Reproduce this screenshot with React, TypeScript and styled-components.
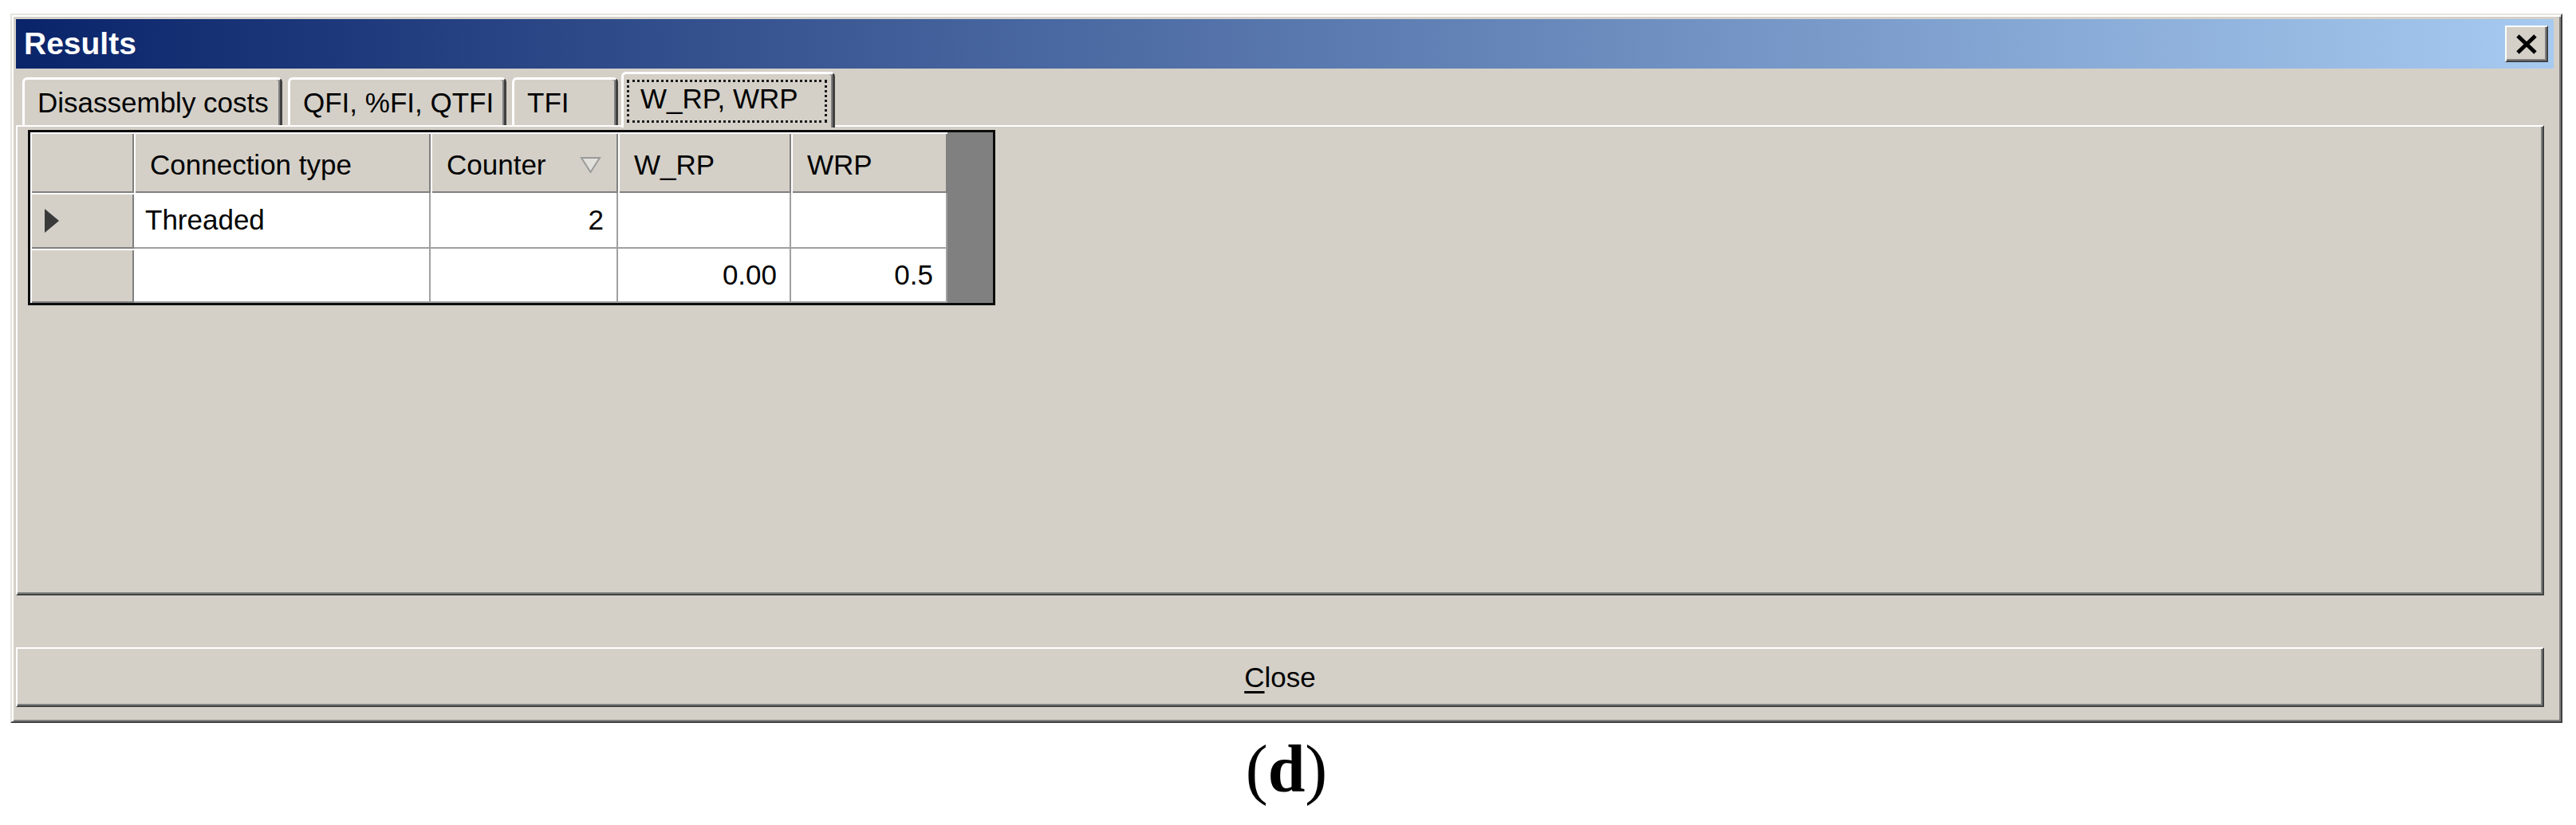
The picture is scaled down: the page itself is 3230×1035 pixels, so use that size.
import React from "react";
import styled, { createGlobalStyle } from "styled-components";

const GlobalStyle = createGlobalStyle`
  html, body {
    margin: 0;
    padding: 0;
    background: #ffffff;
  }
  body {
    font-family: "Liberation Sans", Arial, sans-serif;
  }
`;

const face = `"Liberation Sans", Arial, sans-serif`;

const Page = styled.div`
  width: 3230px;
  height: 1035px;
  box-sizing: border-box;
  padding: 17px 0 0 13px;
  background: #ffffff;
  display: flex;
  flex-direction: column;
`;

const Window = styled.div`
  width: 3200px;
  height: 890px;
  box-sizing: border-box;
  flex-shrink: 0;
  display: flex;
  flex-direction: column;
  background: #d4d0c8;
  border: 2px solid;
  border-color: #e6e4de #404040 #404040 #e6e4de;
  box-shadow: inset 2px 2px 0 #ffffff, inset -2px -2px 0 #808080;
  padding: 5px 9px 18px 5px;
  font: 35px ${face};
  color: #000;
`;

const TitleBar = styled.div`
  height: 62px;
  flex-shrink: 0;
  display: flex;
  align-items: center;
  justify-content: space-between;
  padding: 0 7px 0 10px;
  background: linear-gradient(to right, #0a246a, #a6caf0);
  color: #ffffff;
  font: bold 39px ${face};
`;

const CaptionButton = styled.div`
  width: 54px;
  height: 46px;
  box-sizing: border-box;
  display: flex;
  align-items: center;
  justify-content: center;
  background: #d4d0c8;
  border: 2px solid;
  border-color: #ffffff #404040 #404040 #ffffff;
  box-shadow: inset -2px -2px 0 #808080;
`;

const Content = styled.div`
  flex: 1;
  display: flex;
  flex-direction: column;
  padding-right: 12px;
`;

const TabStrip = styled.div`
  height: 67px;
  margin-top: 4px;
  flex-shrink: 0;
  display: flex;
  align-items: flex-start;
  gap: 7px;
  padding-left: 8px;
  position: relative;
  z-index: 1;
`;

const Tab = styled.div<{ $width: number; $selected?: boolean }>`
  width: ${(p) => p.$width}px;
  height: ${(p) => (p.$selected ? 70 : 60)}px;
  margin-top: ${(p) => (p.$selected ? 0 : 7)}px;
  margin-left: ${(p) => (p.$selected ? -3 : 0)}px;
  box-sizing: border-box;
  display: flex;
  align-items: ${(p) => (p.$selected ? "flex-start" : "center")};
  padding-left: ${(p) => (p.$selected ? 4 : 16)}px;
  padding-top: ${(p) => (p.$selected ? 7 : 0)}px;
  background: #d4d0c8;
  border-style: solid;
  border-width: 3px 3px 0 3px;
  border-color: #ffffff #404040 transparent #ffffff;
  border-radius: 6px 6px 0 0;
  box-shadow: inset -2px 0 0 #808080;
  white-space: nowrap;
`;

const FocusRect = styled.div`
  width: 251px;
  height: 54px;
  box-sizing: border-box;
  border: 3px dotted #1a1a1a;
  display: flex;
  align-items: center;
  padding: 0 0 6px 14px;
`;

const Panel = styled.div`
  height: 590px;
  flex-shrink: 0;
  box-sizing: border-box;
  background: #d4d0c8;
  border: 2px solid;
  border-color: #ffffff #404040 #404040 #ffffff;
  box-shadow: inset -2px -2px 0 #808080;
  padding: 4px 0 0 13px;
`;

const Grid = styled.div`
  width: 1213px;
  height: 220px;
  box-sizing: border-box;
  border: 3px solid #0c0c0c;
  background: #808080;
  display: flex;
  flex-direction: column;
`;

const Row = styled.div<{ $height: number }>`
  display: grid;
  grid-template-columns: 130px 372px 235px 217px 196px;
  height: ${(p) => p.$height}px;
`;

const HeaderCell = styled.div`
  display: flex;
  align-items: center;
  justify-content: space-between;
  padding: 6px 21px 0 20px;
  background: #d4d0c8;
  box-shadow: inset 2px 2px 0 #ffffff, inset -2px -2px 0 #808080;
  white-space: nowrap;
`;

const RowHeaderCell = styled.div`
  display: flex;
  align-items: center;
  padding-left: 18px;
  background: #d4d0c8;
  box-shadow: inset 2px 2px 0 #ffffff, inset -2px -2px 0 #808080;
`;

const DataCell = styled.div<{ $align?: "left" | "right" }>`
  display: flex;
  align-items: center;
  justify-content: ${(p) => (p.$align === "right" ? "flex-end" : "flex-start")};
  padding: 0 16px 0 14px;
  background: #ffffff;
  border-right: 2px solid #a0a0a0;
  border-bottom: 2px solid #a0a0a0;
  white-space: nowrap;
`;

const CloseButton = styled.div`
  height: 75px;
  margin-top: 65px;
  flex-shrink: 0;
  box-sizing: border-box;
  display: flex;
  align-items: center;
  justify-content: center;
  background: #d4d0c8;
  border: 2px solid;
  border-color: #ffffff #404040 #404040 #ffffff;
  box-shadow: inset -2px -2px 0 #808080;

  u {
    text-decoration-thickness: 3px;
    text-underline-offset: 5px;
  }
`;

const Caption = styled.div`
  width: 3200px;
  margin-top: 16px;
  text-align: center;
  font: 84px/84px "Liberation Serif", "Times New Roman", serif;
  color: #000;
`;

function CloseGlyph() {
  return (
    <svg width="28" height="25" viewBox="0 0 28 25">
      <path d="M3 2 L25 23 M25 2 L3 23" stroke="#000" strokeWidth="5" />
    </svg>
  );
}

function SortGlyph() {
  return (
    <svg width="27" height="22" viewBox="0 0 27 22">
      <polygon points="2,2 25,2 13.5,20" fill="#e2e0da" stroke="#9a9a9a" strokeWidth="2" />
    </svg>
  );
}

function RowPointer() {
  return (
    <svg width="18" height="30" viewBox="0 0 18 30">
      <polygon points="0,0 18,15 0,30" fill="#3a3a3a" />
    </svg>
  );
}

export default function App() {
  return (
    <>
      <GlobalStyle />
      <Page>
        <Window>
          <TitleBar>
            <span>Results</span>
            <CaptionButton>
              <CloseGlyph />
            </CaptionButton>
          </TitleBar>
          <Content>
            <TabStrip>
              <Tab $width={326}>Disassembly costs</Tab>
              <Tab $width={274}>QFI, %FI, QTFI</Tab>
              <Tab $width={133}>TFI</Tab>
              <Tab $width={268} $selected>
                <FocusRect>W_RP, WRP</FocusRect>
              </Tab>
            </TabStrip>
            <Panel>
              <Grid>
                <Row $height={76}>
                  <HeaderCell />
                  <HeaderCell>Connection type</HeaderCell>
                  <HeaderCell>
                    Counter
                    <SortGlyph />
                  </HeaderCell>
                  <HeaderCell>W_RP</HeaderCell>
                  <HeaderCell>WRP</HeaderCell>
                </Row>
                <Row $height={70}>
                  <RowHeaderCell>
                    <RowPointer />
                  </RowHeaderCell>
                  <DataCell>Threaded</DataCell>
                  <DataCell $align="right">2</DataCell>
                  <DataCell $align="right" />
                  <DataCell $align="right" />
                </Row>
                <Row $height={68}>
                  <RowHeaderCell />
                  <DataCell />
                  <DataCell $align="right" />
                  <DataCell $align="right">0.00</DataCell>
                  <DataCell $align="right">0.5</DataCell>
                </Row>
              </Grid>
            </Panel>
            <CloseButton>
              <span>
                <u>C</u>lose
              </span>
            </CloseButton>
          </Content>
        </Window>
        <Caption>
          (<b>d</b>)
        </Caption>
      </Page>
    </>
  );
}
